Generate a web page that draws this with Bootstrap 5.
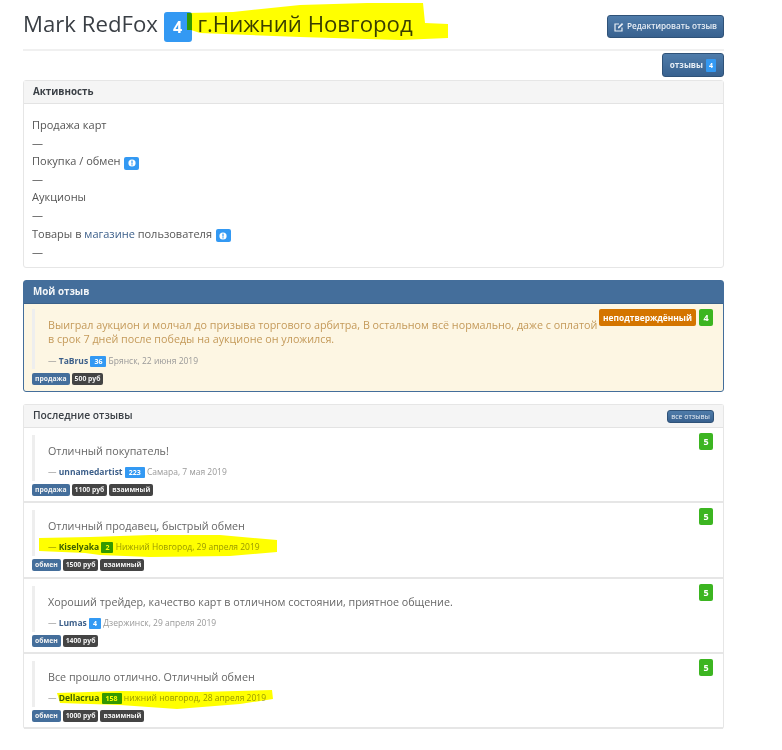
<!DOCTYPE html>
<html lang="en">
<head>
  <meta charset="UTF-8">
  <title>Mark RedFox</title>
  <meta name="viewport" content="width=device-width, initial-scale=1.0">
  <link href="https://cdn.jsdelivr.net/npm/bootstrap@5.3.0/dist/css/bootstrap.min.css" rel="stylesheet" />
  <style>
    html, body { height: 750px; overflow: hidden; }
    body {
      font-family: "Open Sans", "Liberation Sans", sans-serif;
      font-size: 11px;
      color: #444;
      background: #fff;
    }
    a { color: #3c5f8a; text-decoration: none; }
    .page-wrap { position: relative; height: 750px; padding: 0 58px 0 23px; }

    .page-head {
      height: 51px;
      border-bottom: 2px solid #f0f0f0;
      padding-top: 9px;
    }
    .page-title { font-size: 22.2px; font-weight: 400; line-height: 30px; margin: 0; color: #3a3f45; white-space: nowrap; }
    .count-box {
      display: inline-block;
      width: 28px; height: 30px;
      line-height: 30px;
      text-align: center;
      background: #3399f3;
      color: #fff;
      font-size: 16px;
      font-weight: 700;
      border-radius: 3px;
      vertical-align: top;
      position: relative;
      top: 3px;
    }
    .btn-steel {
      background: linear-gradient(#4f7caa, #38618f);
      border: 1px solid #2f5278;
      color: #e8eef5;
      border-radius: 3px;
      font-weight: 600;
      line-height: 1;
    }
    .btn-steel:hover { color: #fff; }
    .btn-edit { font-size: 8.2px; padding: 0 6px; height: 23px; margin-top: 6px; display: flex; align-items: center; gap: 3px; }
    .btn-reviews { font-size: 8.2px; font-weight: 700; padding: 0 7px; height: 24px; display: flex; align-items: center; gap: 3px; }
    .btn-all { font-size: 7px; padding: 0 3px; height: 13px; font-weight: 400; display: flex; align-items: center; }
    .mini-count { background: #3399f3; color: #fff; font-size: 7px; font-weight: 700; padding: 3px 3px; border-radius: 1px; }
    .btn-row { height: 29px; padding-top: 2px; }

    .box { border: 1px solid #e6e6e6; border-radius: 3px; background: #fff; }
    .box-head {
      height: 23px;
      background: #f5f5f5;
      border-bottom: 1px solid #e3e3e3;
      padding: 0 9px;
      font-size: 9.8px;
      font-weight: 700;
      color: #3a3f45;
      display: flex; align-items: center; justify-content: space-between;
    }
    .head-soft { font-size: 10.3px; font-weight: 600; }
    .activity-box { height: 188px; margin-bottom: 12px; }
    .activity-body { padding: 12px 8px 0; font-size: 11px; line-height: 18.1px; color: #555; }
    .hint-box {
      display: inline-flex; align-items: center; justify-content: center;
      width: 15px; height: 13px;
      background: #3399f3; border-radius: 2px; vertical-align: -2px;
      margin-left: 1px;
    }
    .hint-box svg { display: block; }

    .my-box { height: 112px; margin-bottom: 12px; border-color: #446e9b; background: #fdf6e3; }
    .my-box .box-head { background: #446e9b; border-bottom-color: #3b6189; color: #f2f5f8; }
    .my-box .review-text { color: #c49a5a; margin-bottom: 9px; }
    .my-box .review-item { padding-top: 5px; }
    .my-box .review-quote { padding-bottom: 2px; }

    .review-item { position: relative; padding: 7px 8px 0; height: 75.25px; border-bottom: 2px solid #e6e6e6; }
    .review-quote {
      border-left: 3px solid #eee;
      padding: 9px 0 3px 13px;
    }
    .review-text { font-size: 10.75px; line-height: 14px; color: #666; margin: 0 0 8px; }
    .review-meta { font-size: 8.5px; line-height: 12px; color: #999; white-space: nowrap; }
    .review-meta a { font-weight: 700; color: #3c5f8a; }
    .user-count { display: inline-block; background: #3399f3; color: #fff; font-size: 7px; font-weight: 700; padding: 0 4px; line-height: 11px; border-radius: 1px; vertical-align: 0; }
    .tag-row { display: flex; gap: 2px; margin-top: 3px; }
    .my-box .tag-row { margin-top: 4px; }
    .tag-item { font-size: 6.8px; font-weight: 700; line-height: 12px; padding: 0 3px; border-radius: 2px; color: #f2f2f2; background: #444; }
    .tag-blue { background: #446e9b; }
    .score-wrap { position: absolute; top: 5px; right: 10px; display: flex; gap: 3px; }
    .score-box { background: #3cb521; color: #fff; font-size: 9px; font-weight: 700; width: 14px; height: 17px; line-height: 17px; text-align: center; border-radius: 2px; }
    .state-box { background: #d47500; color: #fff; font-size: 8.4px; font-weight: 700; height: 17px; line-height: 17px; padding: 0 4px; border-radius: 2px; }

    .marker-layer { position: absolute; left: 0; top: 0; pointer-events: none; mix-blend-mode: multiply; }
  </style>
</head>
<body>
<div class="page-wrap">
  <div class="page-head d-flex justify-content-between align-items-start">
    <h1 class="page-title">Mark RedFox <span class="count-box">4</span> г.Нижний Новгород</h1>
    <a class="btn-steel btn-edit" href="#">
      <svg width="10" height="10" viewBox="0 0 10 10" fill="none" stroke="#e8eef5" stroke-width="1.2"><path d="M8 5.5V9H1V2h4"/><path d="M4 6.5V5l4-4 1.2 1.2-4 4z" fill="#e8eef5" stroke="none"/></svg>
      Редактировать отзыв
    </a>
  </div>

  <div class="btn-row d-flex justify-content-end">
    <a class="btn-steel btn-reviews" href="#">отзывы <span class="mini-count">4</span></a>
  </div>

  <div class="box activity-box">
    <div class="box-head">Активность</div>
    <div class="activity-body">
      <div>Продажа карт</div>
      <div>—</div>
      <div>Покупка / обмен <span class="hint-box"><svg width="8" height="8" viewBox="0 0 8 8"><circle cx="4" cy="4" r="3.6" fill="#fff"/><rect x="3.4" y="1.6" width="1.2" height="3" fill="#3399f3"/><rect x="3.4" y="5.2" width="1.2" height="1.2" fill="#3399f3"/></svg></span></div>
      <div>—</div>
      <div>Аукционы</div>
      <div>—</div>
      <div>Товары в <a href="#">магазине</a> пользователя <span class="hint-box"><svg width="8" height="8" viewBox="0 0 8 8"><circle cx="4" cy="4" r="3.6" fill="#fff"/><rect x="3.4" y="1.6" width="1.2" height="3" fill="#3399f3"/><rect x="3.4" y="5.2" width="1.2" height="1.2" fill="#3399f3"/></svg></span></div>
      <div>—</div>
    </div>
  </div>

  <div class="box my-box">
    <div class="box-head">Мой отзыв</div>
    <div class="review-item border-0 h-auto">
      <div class="review-quote">
        <p class="review-text">Выиграл аукцион и молчал до призыва торгового арбитра, В остальном всё нормально, даже с оплатой<br>в срок 7 дней после победы на аукционе он уложился.</p>
        <div class="review-meta">— <a href="#">TaBrus</a> <span class="user-count">36</span> Брянск, 22 июня 2019</div>
      </div>
      <div class="tag-row"><span class="tag-item tag-blue">продажа</span><span class="tag-item">500 руб</span></div>
      <div class="score-wrap"><span class="state-box">неподтверждённый</span><span class="score-box">4</span></div>
    </div>
  </div>

  <div class="box border-bottom-0">
    <div class="box-head head-soft">Последние отзывы <a class="btn-steel btn-all" href="#">все отзывы</a></div>

    <div class="review-item">
      <div class="review-quote">
        <p class="review-text">Отличный покупатель!</p>
        <div class="review-meta">— <a href="#">unnamedartist</a> <span class="user-count">223</span> Самара, 7 мая 2019</div>
      </div>
      <div class="tag-row"><span class="tag-item tag-blue">продажа</span><span class="tag-item">1100 руб</span><span class="tag-item">взаимный</span></div>
      <div class="score-wrap"><span class="score-box">5</span></div>
    </div>

    <div class="review-item">
      <div class="review-quote">
        <p class="review-text">Отличный продавец, быстрый обмен</p>
        <div class="review-meta">— <a href="#">Kiselyaka</a> <span class="user-count">2</span> Нижний Новгород, 29 апреля 2019</div>
      </div>
      <div class="tag-row"><span class="tag-item tag-blue">обмен</span><span class="tag-item">1500 руб</span><span class="tag-item">взаимный</span></div>
      <div class="score-wrap"><span class="score-box">5</span></div>
    </div>

    <div class="review-item">
      <div class="review-quote">
        <p class="review-text">Хороший трейдер, качество карт в отличном состоянии, приятное общение.</p>
        <div class="review-meta">— <a href="#">Lumas</a> <span class="user-count">4</span> Дзержинск, 29 апреля 2019</div>
      </div>
      <div class="tag-row"><span class="tag-item tag-blue">обмен</span><span class="tag-item">1400 руб</span></div>
      <div class="score-wrap"><span class="score-box">5</span></div>
    </div>

    <div class="review-item">
      <div class="review-quote">
        <p class="review-text">Все прошло отлично. Отличный обмен</p>
        <div class="review-meta">— <a href="#">Dellacrua</a> <span class="user-count">158</span> нижний новгород, 28 апреля 2019</div>
      </div>
      <div class="tag-row"><span class="tag-item tag-blue">обмен</span><span class="tag-item">1000 руб</span><span class="tag-item">взаимный</span></div>
      <div class="score-wrap"><span class="score-box">5</span></div>
    </div>
  </div>

  <!-- marker strokes drawn over the screenshot -->
  <svg class="marker-layer" width="782" height="750" viewBox="0 0 782 750">
    <path fill="#ffff00" d="M187 13 L233 12 L300 5 L367 3 L423 3 L425 23 L448 24 L448 38 L400 40 L300 37 L200 33 L191 30 L187 30 Z"/>
    <path fill="#ffff00" d="M39 538 L90 537 L150 535 L220 535 L277 540 L277 552 L230 556 L150 557 L100 555 L85 553 L39 551 Z"/>
    <path fill="#ffff00" d="M57 693 L120 691 L200 692 L272 690 L273 699 L240 704 L177 709 L120 705 L60 703 Z"/>
  </svg>
</div>
<script src="https://cdn.jsdelivr.net/npm/bootstrap@5.3.0/dist/js/bootstrap.bundle.min.js"></script>
</body>
</html>
